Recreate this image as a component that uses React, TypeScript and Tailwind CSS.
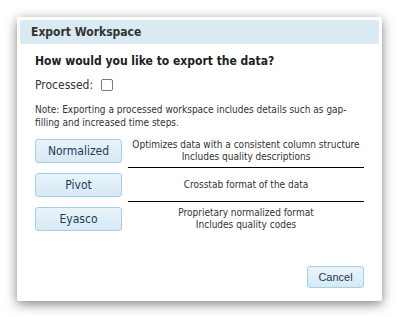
const rows = [
  { label: "Normalized", lines: ["Optimizes data with a consistent column structure", "Includes quality descriptions"] },
  { label: "Pivot", lines: ["Crosstab format of the data"] },
  { label: "Eyasco", lines: ["Proprietary normalized format", "Includes quality codes"] },
];

const btn =
  "rounded-[3px] border border-[#a6cfe3] bg-gradient-to-b from-[#e9f4fa] to-[#d6e9f4] text-[#1d3b58]";

export default function App() {
  return (
    <div className="w-[399px] h-[317px] bg-white pt-[17px] pl-[17px] font-['DejaVu_Sans_Condensed',sans-serif] text-[#333]">
      <div className="w-[365px] p-[3px] bg-white rounded-[2px] shadow-[0_3px_12px_rgba(0,0,0,0.5)]">
        <div className="h-[24px] rounded-[3px] bg-[#d9eaf3] pl-[11px] text-[12px] font-bold leading-[24px] text-[#333]">
          Export Workspace
        </div>

        <div className="px-[15px] pb-[10px]">
          <div className="mt-[9px] text-[12px] font-bold leading-[16px] text-[#222]">
            How would you like to export the data?
          </div>

          <div className="mt-[8px] flex h-[16px] items-center gap-[8px] text-[12px]">
            <span>Processed:</span>
            <span className="h-[12px] w-[12px] rounded-[2px] border border-[#777] bg-white" />
          </div>

          <p className="mt-[10px] text-[10px] leading-[13px] text-[#333]">
            Note: Exporting a processed workspace includes details such as gap-filling and increased time steps.
          </p>

          <div className="mt-[5px]">
            {rows.map((r, i) => (
              <div key={r.label} className="flex items-center gap-[6px]">
                <button className={`${btn} h-[24px] w-[87px] text-[12px]`}>{r.label}</button>
                <div
                  className={`flex flex-1 flex-col items-center justify-center text-center text-[10px] leading-[12px] ${
                    i < rows.length - 1 ? "h-[34px] border-b border-black" : "h-[33px]"
                  }`}
                >
                  {r.lines.map((l) => (
                    <span key={l}>{l}</span>
                  ))}
                </div>
              </div>
            ))}
          </div>

          <div className="mt-[31px] flex justify-end">
            <button className={`${btn} h-[22px] w-[57px] font-['Liberation_Sans',sans-serif] text-[11px]`}>
              Cancel
            </button>
          </div>
        </div>
      </div>
    </div>
  );
}
